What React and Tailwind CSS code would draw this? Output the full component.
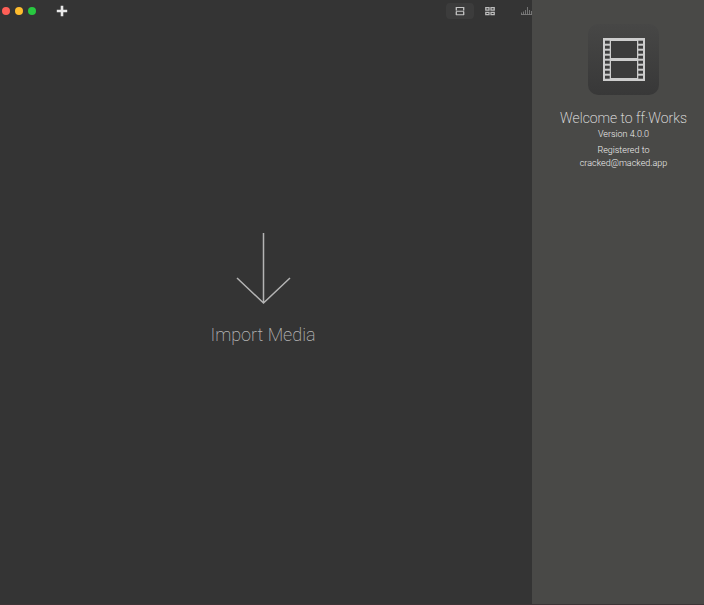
import React from "react";

const holes = [3, 8, 13, 18, 23, 28, 33, 38];

function FilmIcon({ className }) {
  return (
    <svg viewBox="0 0 42 43" className={className} aria-hidden="true">
      <rect width="42" height="43" fill="#cdcdcd" />
      <rect x="8" y="3" width="26" height="17" fill="#3c3c3c" />
      <rect x="8" y="23" width="26" height="17" fill="#3c3c3c" />
      {holes.map((y) => (
        <React.Fragment key={y}>
          <rect x="2" y={y - 0.3} width="4.7" height="3" fill="#3c3c3c" />
          <rect x="35.3" y={y - 0.3} width="4.7" height="3" fill="#3c3c3c" />
        </React.Fragment>
      ))}
    </svg>
  );
}

function Toolbar() {
  return (
    <header className="flex h-[22px] items-center overflow-hidden">
      <div className="flex flex-1 items-center pl-0.5">
        <div className="flex gap-[5px]">
          <button aria-label="Close" className="size-2 rounded-full bg-[#ff5f57]" />
          <button aria-label="Minimize" className="size-2 rounded-full bg-[#febc2e]" />
          <button aria-label="Zoom" className="size-2 rounded-full bg-[#28c840]" />
        </div>
        <button aria-label="Add" className="ml-5">
          <svg viewBox="0 0 12 12" className="size-3">
            <path d="M6 .8v10.4M.8 6h10.4" stroke="#e8e8e8" strokeWidth="2.6" />
          </svg>
        </button>
      </div>
      <button
        aria-label="Single view"
        className="flex h-4 w-7 items-center justify-center rounded bg-[#3c3c3c]"
      >
        <svg viewBox="0 0 10 10" className="size-[10px]" fill="none" stroke="#c4c4c4">
          <path d="M1 5.2h8M1 1.5h8M1 8.8h8" strokeWidth="1.1" />
          <path d="M1.3 1v8.3M8.7 1v8.3" strokeWidth="1.3" strokeDasharray="3.4 1.2" />
        </svg>
      </button>
      <button aria-label="Grid view" className="flex h-4 w-8 items-center justify-center">
        <svg viewBox="0 0 10 10" className="size-[10px]" fill="none" stroke="#bcbcbc" strokeWidth="1.3">
          <path d="M.8 1.7h3.2v2.4H.8zM6 1.7h3.2v2.4H6zM.8 6.3h3.2v2.4H.8zM6 6.3h3.2v2.4H6z" />
        </svg>
      </button>
      <button aria-label="Statistics" className="ml-[15px] h-4 w-[11px] overflow-hidden">
        <svg viewBox="0 0 11 16" className="h-4 w-[11px]" stroke="#7c7c7c">
          <path d="M0 11.5h11M.5 12V9.5M2.5 12V8.5M4.5 12V7M6.5 12V4M8.5 12V7M10.5 12V8" strokeWidth=".9" />
        </svg>
      </button>
    </header>
  );
}

function ImportArea() {
  return (
    <button className="flex flex-1 flex-col items-center justify-center pr-1.5 pb-12 text-[#b4b4b4]">
      <svg viewBox="0 0 56 74" className="h-[74px] w-14" fill="none" stroke="#b4b4b4" strokeWidth="1.5">
        <path d="M28.5 2v70M2 47l26.5 25L55 47" />
      </svg>
      <span className="mt-[18px] text-[18px] leading-6 font-extralight">Import Media</span>
    </button>
  );
}

function WelcomePanel() {
  return (
    <aside className="flex w-[172px] shrink-0 flex-col items-center bg-[#494947] pt-6 pl-[11px] text-center text-[#f0f0f0]">
      <div className="flex size-[71px] items-center justify-center rounded-[10px] bg-linear-to-b from-[#474746] to-[#383838]">
        <FilmIcon className="h-[43px] w-[42px]" />
      </div>
      <h1 className="mt-[13px] text-[14px] leading-5 font-extralight whitespace-nowrap">
        Welcome to ff·Works
      </h1>
      <p className="text-[9px] leading-3 font-light">Version 4.0.0</p>
      <p className="mt-1 text-[9px] leading-[13px] font-light">
        Registered to
        <br />
        cracked@macked.app
      </p>
    </aside>
  );
}

function App() {
  return (
    <div className="flex min-h-screen border-b border-[#3c3436] bg-[#343434] font-['Roboto','Liberation_Sans',sans-serif] antialiased">
      <main className="flex min-w-0 flex-1 flex-col">
        <Toolbar />
        <ImportArea />
      </main>
      <WelcomePanel />
    </div>
  );
}

export default App;
